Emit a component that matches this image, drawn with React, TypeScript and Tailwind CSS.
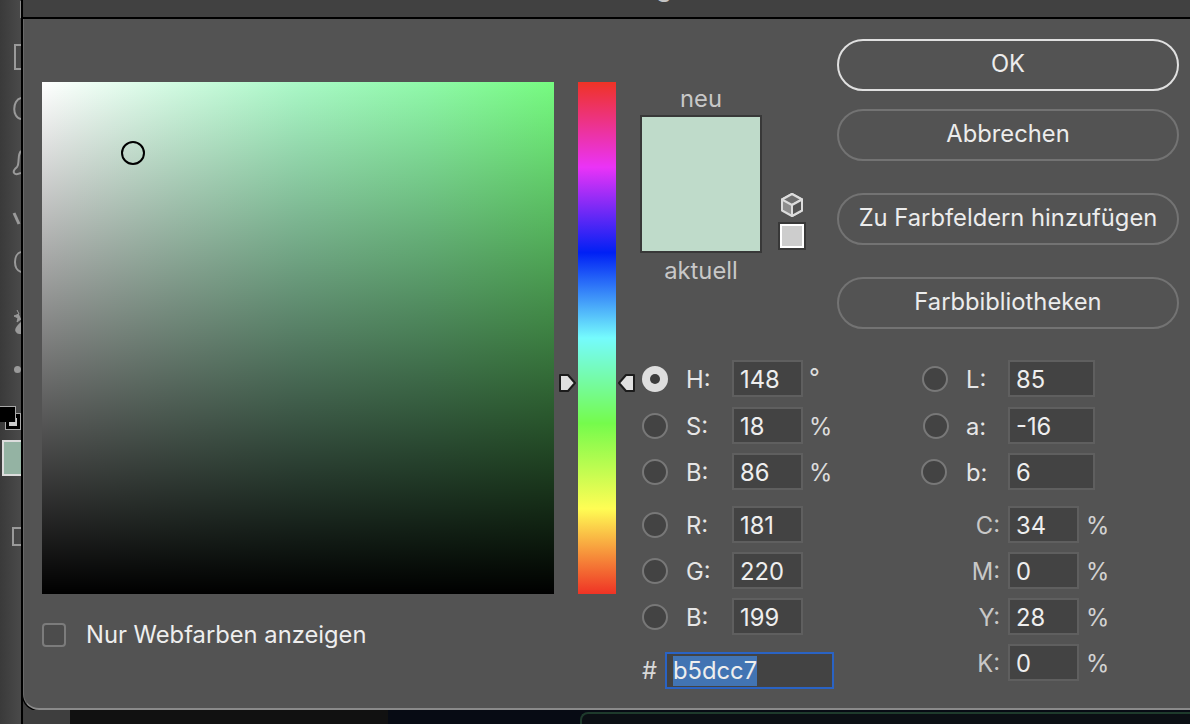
const FONT = "font-['Inter','Liberation_Sans',sans-serif]";

function Radio({ on, className = "" }: { on?: boolean; className?: string }) {
  if (on) {
    return (
      <span className={`flex h-[26px] w-[26px] items-center justify-center rounded-full bg-[#dedede] ${className}`}>
        <span className="h-[10px] w-[10px] rounded-full bg-[#3c3c3c]" />
      </span>
    );
  }
  return <span className={`block h-[26px] w-[26px] rounded-full border-2 border-[#787878] bg-[#434343] ${className}`} />;
}

function Field({ value, w }: { value: string; w: string }) {
  return (
    <div className={`flex h-[37px] items-center border-2 border-[#5f5f5f] bg-[#434343] pl-[6px] pt-[3px] text-[23.75px] text-[#eeeeee] ${w}`}>
      {value}
    </div>
  );
}

function HsbRow({ label, value, unit, on, mt }: { label: string; value: string; unit?: string; on?: boolean; mt: string }) {
  return (
    <div className={`flex h-[37px] items-center ${mt}`}>
      <Radio on={on} className="ml-[2px]" />
      <span className="ml-[18px] w-[46px] pt-[3px] text-[23.75px] text-[#e6e6e6]">{label}</span>
      <Field value={value} w="w-[71px]" />
      {unit && <span className={`ml-[6px] text-[23.75px] text-[#dcdcdc] ${unit === "°" ? "-mt-[2px]" : "pt-[3px]"}`}>{unit}</span>}
    </div>
  );
}

function LabRow({ label, value, mt, shift }: { label: string; value: string; mt: string; shift: string }) {
  return (
    <div className={`flex h-[37px] items-center ${mt}`}>
      <Radio className={shift} />
      <span className="ml-[18px] w-[42px] pt-[3px] text-[23.75px] text-[#e6e6e6]">{label}</span>
      <Field value={value} w="w-[87px]" />
    </div>
  );
}

function CmykRow({ label, value, mt }: { label: string; value: string; mt: string }) {
  return (
    <div className={`flex h-[37px] items-center ${mt}`}>
      <span className="w-[86px] pr-[8px] pt-[3px] text-right text-[23.75px] text-[#c8c8c8]">{label}</span>
      <Field value={value} w="w-[71px]" />
      <span className="ml-[7px] pt-[3px] text-[23.75px] text-[#d2d2d2]">%</span>
    </div>
  );
}

function DialogButton({ children, primary, mt }: { children: string; primary?: boolean; mt: string }) {
  return (
    <div
      className={`flex h-[52px] w-[342px] items-center justify-center rounded-[26px] border-2 pb-[2px] text-[23.75px] text-[#ececec] ${mt} ${
        primary ? "border-[#e0e0e0]" : "border-[#737373]"
      }`}
    >
      {children}
    </div>
  );
}

export default function App() {
  return (
    <div className={`relative flex h-[724px] w-[1190px] overflow-hidden bg-[#0a0d12] ${FONT}`}>
      {/* photoshop tool strip peeking out behind the dialog */}
      <div className="relative h-full w-[23px] shrink-0 border-r-2 border-black bg-[linear-gradient(to_right,#3a3a3a,#4a4a4a)]">
        <svg className="absolute left-0 top-0" width="21" height="724" fill="none" stroke="#9a9a9a" strokeWidth="2">
          <path d="M21 1V18" stroke="#8a8a8a" />
          <path d="M21 45H15V69H21" />
          <path d="M21 98C12 100 12 118 21 119" />
          <path d="M21 151C17 155 20 163 17 167C11 172 14 176 21 173" />
          <path d="M14 213L19 224" strokeWidth="3" />
          <path d="M21 252C13 254 13 270 21 272" />
          <path d="M21 528H13V545H21" />
          <path d="M17 310L19 314L14 316L18 318L17 322L21 319" fill="#9a9a9a" strokeWidth="1" />
          <path d="M21 322C16 326 14 330 16 332C17 334 19 334 21 334Z" fill="#9a9a9a" stroke="none" />
        </svg>
        <span className="absolute left-[14px] top-[366px] h-[7px] w-[7px] rounded-full bg-[#9a9a9a]" />
        <span className="absolute left-[5px] top-[413px] flex h-[17px] w-[16px] items-end justify-end border border-[#a8a8a8] bg-black pb-[3px] pr-[3px]">
          <span className="h-[8px] w-[8px] bg-[#cccccc]" />
        </span>
        <span className="absolute left-0 top-[406px] h-[16px] w-[16px] border-r border-t border-[#a8a8a8] bg-black" />
        <span className="absolute left-[2px] top-[440px] h-[36px] w-[19px] border-2 border-r-0 border-[#dcdcdc] bg-[#94b3a3]" />
      </div>

      <div className="flex min-w-0 flex-1 flex-col bg-[#3e3e3e]">
        {/* title bar, the text is cut off by the top of the shot */}
        <div className="flex h-[19px] shrink-0 justify-end overflow-hidden border-b-2 border-black bg-[#414141] pr-[382px]">
          <span className="-mt-[25px] whitespace-nowrap text-[27px] leading-[24px] text-[#c4c4c4]">Farbwähler (Vordergrundfarbe)</span>
        </div>

        {/* dialog */}
        <div className="flex h-[691px] shrink-0 rounded-bl-[16px] border-b-2 border-l border-b-[#8a8a8a] border-l-[#6a6a6a] bg-[#535353] pl-[18px] pt-[20px] shadow-[-1px_1px_0_#000]">
          <div className="flex w-[512px] shrink-0 flex-col pt-[43px]">
            <div className="relative h-[512px] w-[512px] bg-[linear-gradient(to_top,#000,transparent),linear-gradient(to_right,#fff,#d2fbe2_25%,#a9f8c6_50%,#8ff9a9_75%,#76fb80)]">
              <span className="absolute left-[79px] top-[59px] h-[24px] w-[24px] rounded-full border-2 border-black" />
            </div>
            <div className="mt-[29px] flex h-[24px] items-center">
              <span className="h-[24px] w-[24px] rounded-[4px] border-2 border-[#7c7c7c] bg-[#4c4c4c]" />
              <span className="ml-[20px] text-[23.75px] leading-[24px] text-[#eeeeee]">Nur Webfarben anzeigen</span>
            </div>
          </div>

          <div className="ml-[24px] shrink-0 pt-[43px]">
            <div className="relative h-[512px] w-[38px] bg-[linear-gradient(to_bottom,#ef3325,#ea33f7_16.67%,#0020f5_33.33%,#75fbfd_50%,#75fb4c_66.67%,#fffd54_83.33%,#ef3325)]">
              <svg className="absolute left-[-21px] top-[291px]" width="20" height="20" viewBox="0 0 20 20">
                <path d="M3 2H11L18 10L11 18H3Z" fill="#e0e0e0" stroke="#1c1c1c" strokeWidth="2" strokeLinejoin="round" />
              </svg>
              <svg className="absolute right-[-21px] top-[291px]" width="20" height="20" viewBox="0 0 20 20">
                <path d="M17 2H9L2 10L9 18H17Z" fill="#e0e0e0" stroke="#1c1c1c" strokeWidth="2" strokeLinejoin="round" />
              </svg>
            </div>
          </div>

          <div className="ml-[24px] flex min-w-0 flex-1 flex-col">
            <div className="flex h-[321px] shrink-0">
              <div className="flex w-[197px] shrink-0 flex-col">
                <div className="mt-[46px] flex w-[122px] justify-center text-[23.75px] leading-[28px] text-[#c8c8c8]">neu</div>
                <div className="flex items-end">
                  <div className="mt-[2px] h-[138px] w-[122px] border-2 border-[#383838] bg-[#bfdbca]" />
                  <div className="mb-[3px] ml-[16px] flex flex-col items-center">
                    <svg width="24" height="26" viewBox="0 0 24 26" fill="none">
                      <path d="M12 2L22 7.5V18.5L12 24L2 18.5V7.5Z" fill="#8e8e8e" stroke="#dcdcdc" strokeWidth="2" strokeLinejoin="round" />
                      <path d="M2 7.5L12 13L22 7.5L12 2Z" fill="#6e6e6e" stroke="#dcdcdc" strokeWidth="2" strokeLinejoin="round" />
                      <path d="M12 13V24" stroke="#dcdcdc" strokeWidth="2" />
                      <path d="M12 13L22 7.5V18.5L12 24Z" fill="#535353" stroke="#dcdcdc" strokeWidth="2" strokeLinejoin="round" />
                    </svg>
                    <div className="mt-[4px] h-[28px] w-[28px] border-2 border-[#383838] bg-[#cdcdcd] outline-2 -outline-offset-4 outline-white" />
                  </div>
                </div>
                <div className="mt-[2px] flex w-[122px] justify-center text-[23.75px] leading-[32px] text-[#c8c8c8]">aktuell</div>
              </div>
              <div className="flex flex-col">
                <DialogButton primary mt="">OK</DialogButton>
                <DialogButton mt="mt-[18px]">Abbrechen</DialogButton>
                <DialogButton mt="mt-[32px]">Zu Farbfeldern hinzufügen</DialogButton>
                <DialogButton mt="mt-[32px]">Farbbibliotheken</DialogButton>
              </div>
            </div>

            <div className="flex">
              <div className="flex w-[282px] shrink-0 flex-col">
                <HsbRow label="H:" value="148" unit="°" on mt="" />
                <HsbRow label="S:" value="18" unit="%" mt="mt-[10px]" />
                <HsbRow label="B:" value="86" unit="%" mt="mt-[9px]" />
                <HsbRow label="R:" value="181" mt="mt-[16px]" />
                <HsbRow label="G:" value="220" mt="mt-[9px]" />
                <HsbRow label="B:" value="199" mt="mt-[9px]" />
                <div className="mt-[17px] flex h-[37px] items-center">
                  <span className="ml-[2px] w-[23px] text-[23.75px] text-[#d8d8d8]">#</span>
                  <div className="flex h-[37px] w-[169px] items-center border-2 border-[#2a63c4] bg-[#434343] pl-[6px] text-[23.75px] text-[#eeeeee]">
                    <span className="bg-[#4274b3] leading-[30px]">b5dcc7</span>
                  </div>
                </div>
              </div>
              <div className="flex flex-col">
                <LabRow label="L:" value="85" mt="" shift="" />
                <LabRow label="a:" value="-16" mt="mt-[10px]" shift="ml-[1px] -mr-[1px]" />
                <LabRow label="b:" value="6" mt="mt-[9px]" shift="-ml-[1px] mr-[1px]" />
                <CmykRow label="C:" value="34" mt="mt-[16px]" />
                <CmykRow label="M:" value="0" mt="mt-[9px]" />
                <CmykRow label="Y:" value="28" mt="mt-[9px]" />
                <CmykRow label="K:" value="0" mt="mt-[9px]" />
              </div>
            </div>
          </div>
        </div>

        {/* whatever is behind the dialog */}
        <div className="flex min-h-0 flex-1">
          <div className="w-[47px] shrink-0 bg-[#3e3e3e]" />
          <div className="w-[318px] shrink-0 bg-[#111111]" />
          <div className="flex-1 bg-[#070b14] pl-[192px] pt-[2px]">
            <div className="h-full rounded-tl-[8px] border-l-2 border-t-2 border-[#1e3a2c] bg-[#0b0f14]" />
          </div>
        </div>
      </div>
    </div>
  );
}
